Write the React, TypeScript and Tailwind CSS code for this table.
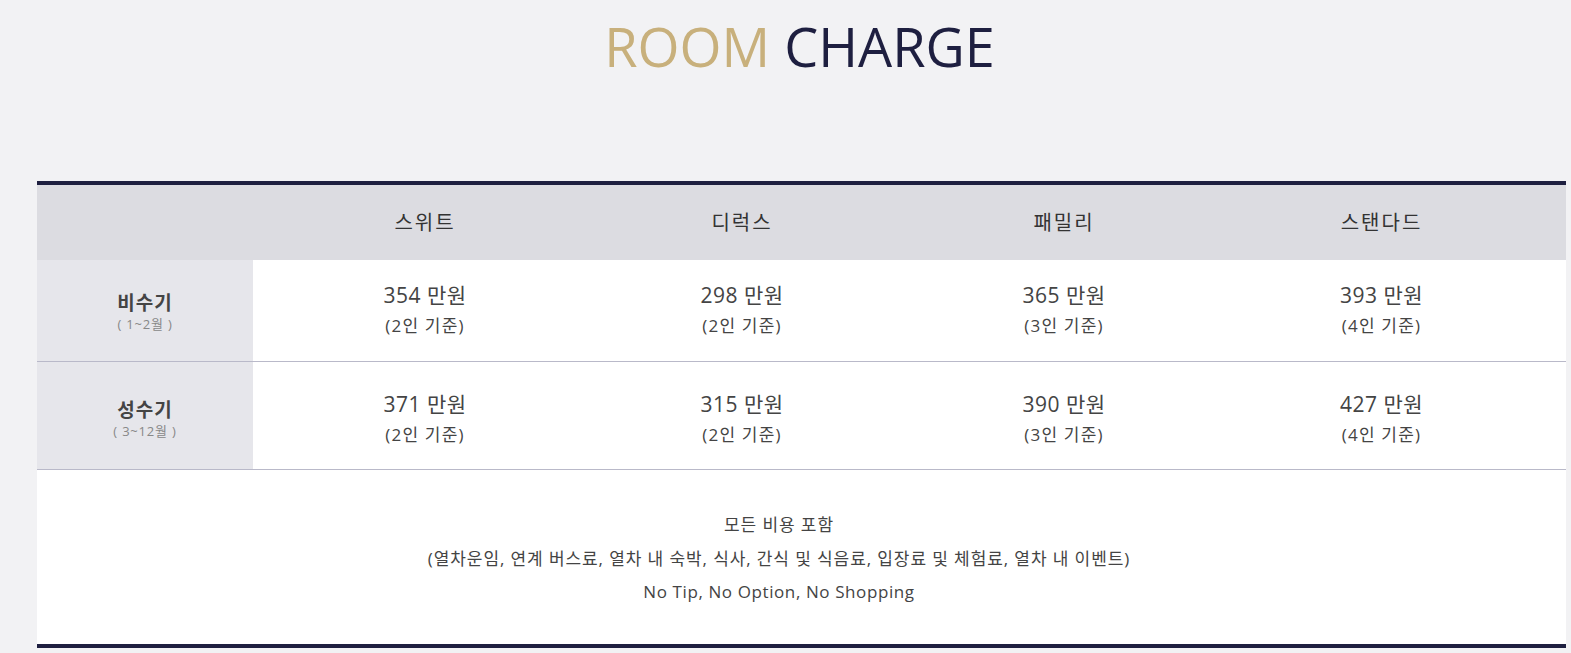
const FONT = '"Open Sans", "Noto Sans CJK KR", sans-serif'

type Season = {
  name: string
  months: string
  prices: { amount: string; base: string }[]
}

const rooms = ['스위트', '디럭스', '패밀리', '스탠다드']

const seasons: Season[] = [
  {
    name: '비수기',
    months: '( 1~2월 )',
    prices: [
      { amount: '354 만원', base: '(2인 기준)' },
      { amount: '298 만원', base: '(2인 기준)' },
      { amount: '365 만원', base: '(3인 기준)' },
      { amount: '393 만원', base: '(4인 기준)' },
    ],
  },
  {
    name: '성수기',
    months: '( 3~12월 )',
    prices: [
      { amount: '371 만원', base: '(2인 기준)' },
      { amount: '315 만원', base: '(2인 기준)' },
      { amount: '390 만원', base: '(3인 기준)' },
      { amount: '427 만원', base: '(4인 기준)' },
    ],
  },
]

// 마지막 칸은 오른쪽 여백을 둬서 원본 정렬에 맞춤
const cellPad = ['', '', '', 'pr-[44px]']

export default function App() {
  return (
    <div className="h-[653px] overflow-hidden bg-[#f2f2f4]" style={{ fontFamily: FONT }}>
      <h1 className="ml-[28px] pt-[11px] text-center text-[54px] leading-[70px] font-normal">
        <span className="text-[#c8b07c]">ROOM</span>{' '}
        <span className="text-[#1e1f40]">CHARGE</span>
      </h1>

      <div className="ml-[37px] mr-[5px] mt-[100px] border-t-[4px] border-b-[4px] border-[#1e1f40] bg-white">
        <div className="grid h-[75px] grid-cols-[216px_344px_290px_354px_1fr] items-center bg-[#dcdce1]">
          <div />
          {rooms.map((r, i) => (
            <div key={r} className={`text-center text-[20px] tracking-[2px] text-[#333] ${cellPad[i]}`}>
              {r}
            </div>
          ))}
        </div>

        {seasons.map((s, idx) => (
          <div
            key={s.name}
            className={`grid grid-cols-[216px_344px_290px_354px_1fr] border-b border-[#b9b9c9] ${idx === 0 ? 'h-[102px]' : 'h-[108px]'}`}
          >
            <div className={`flex flex-col items-center justify-center bg-[#e6e6eb] ${idx === 0 ? 'pt-[2px]' : 'pt-[6px]'}`}>
              <span className="text-[19px] font-bold leading-[26px] tracking-[1px] text-[#444]">{s.name}</span>
              <span className="text-[13px] leading-[17px] tracking-[0.8px] text-[#888]">{s.months}</span>
            </div>
            {s.prices.map((p, i) => (
              <div
                key={i}
                className={`flex flex-col items-center justify-center text-[#444] ${idx === 0 ? 'pb-[2px]' : 'pt-[5px]'} ${cellPad[i]}`}
              >
                <span className="text-[21px] leading-[32px] tracking-[0.5px]">{p.amount}</span>
                <span className="text-[17px] leading-[29px] tracking-[1.2px]">{p.base}</span>
              </div>
            ))}
          </div>
        ))}

        <div className="flex h-[174px] flex-col items-center justify-center pr-[45px] pt-[3px] text-[17px] leading-[33.5px] tracking-[0.9px] text-[#444]">
          <p>모든 비용 포함</p>
          <p>(열차운임, 연계 버스료, 열차 내 숙박, 식사, 간식 및 식음료, 입장료 및 체험료, 열차 내 이벤트)</p>
          <p className="tracking-[0.6px]">No Tip, No Option, No Shopping</p>
        </div>
      </div>
    </div>
  )
}
